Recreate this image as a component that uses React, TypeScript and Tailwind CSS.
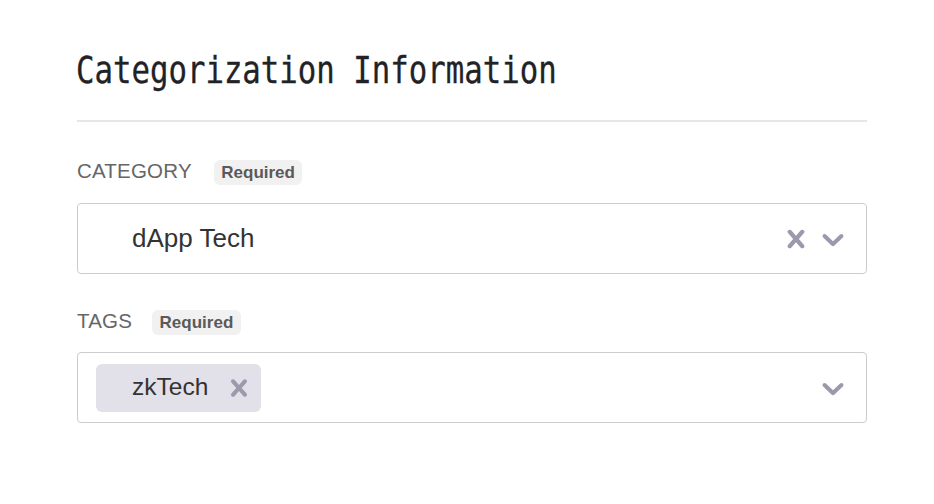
import React from "react";

const CrossIcon = ({ size }: { size: number }) => (
  <svg width={size} height={size} viewBox="0 0 20 20" fill="#9d99ad" aria-hidden="true">
    <path d="M14.348 14.849c-0.469 0.469-1.229 0.469-1.697 0l-2.651-3.030-2.651 3.029c-0.469 0.469-1.229 0.469-1.697 0-0.469-0.469-0.469-1.229 0-1.697l2.758-3.15-2.759-3.152c-0.469-0.469-0.469-1.228 0-1.697s1.228-0.469 1.697 0l2.652 3.031 2.651-3.031c0.469-0.469 1.228-0.469 1.697 0s0.469 1.229 0 1.697l-2.758 3.152 2.758 3.15c0.469 0.469 0.469 1.229 0 1.698z" />
  </svg>
);

const ChevronIcon = ({ size }: { size: number }) => (
  <svg width={size} height={size} viewBox="0 0 20 20" fill="#9d99ad" aria-hidden="true">
    <path d="M4.516 7.548c0.436-0.446 1.043-0.481 1.576 0l3.908 3.747 3.908-3.747c0.533-0.481 1.141-0.446 1.574 0 0.436 0.445 0.408 1.197 0 1.615-0.406 0.418-4.695 4.502-4.695 4.502-0.217 0.223-0.502 0.335-0.787 0.335s-0.57-0.112-0.789-0.335c0 0-4.287-4.084-4.695-4.502s-0.436-1.17 0-1.615z" />
  </svg>
);

const Label = ({ text, gap }: { text: string; gap: string }) => (
  <div className={`flex items-start h-[25px] ${gap}`}>
    <span className="text-[20.5px] leading-[22px] text-[#666666] tracking-[0.2px]">{text}</span>
    <span className="h-[25px] leading-[25px] px-[7.5px] rounded-[6px] bg-[#f1f1f1] text-[17px] font-bold text-[#5a5a5a]">
      Required
    </span>
  </div>
);

export default function App() {
  return (
    <div
      className="w-[934px] h-[504px] bg-white pl-[77px] pt-[47px]"
      style={{ fontFamily: '"Liberation Sans", Arial, sans-serif' }}
    >
      <div className="w-[790px] flex flex-col">
        <h2
          className="h-[46px] leading-[46px] text-[38px] text-[#1f2226] whitespace-nowrap origin-left scale-x-[0.808] -ml-[1px] [-webkit-text-stroke:0.35px_#1f2226]"
          style={{ fontFamily: '"DejaVu Sans Mono", monospace' }}
        >
          Categorization Information
        </h2>
        <div className="mt-[27px] h-[2px] bg-[#e6e6e6]" />

        <div className="mt-[38px]">
          <Label text="CATEGORY" gap="gap-[22px]" />
        </div>
        <div className="mt-[18px] h-[71px] border border-[#cccccc] rounded-[4px] flex items-center justify-between">
          <span className="pl-[54px] text-[26px] text-[#333333]">dApp Tech</span>
          <div className="flex items-center pr-[15px] gap-[1px]">
            <CrossIcon size={36} />
            <ChevronIcon size={36} />
          </div>
        </div>

        <div className="mt-[36px]">
          <Label text="TAGS" gap="gap-[20px]" />
        </div>
        <div className="mt-[17px] h-[71px] border border-[#cccccc] rounded-[4px] flex items-center justify-between">
          <div className="pl-[18px]">
            <div className="h-[48px] rounded-[6px] bg-[#e2e0e8] flex items-center pl-[36px] pr-[5px]">
              <span className="text-[24.5px] text-[#333333]">zkTech</span>
              <span className="ml-[14px] flex">
                <CrossIcon size={34} />
              </span>
            </div>
          </div>
          <div className="flex items-center pr-[15px]">
            <ChevronIcon size={36} />
          </div>
        </div>
      </div>
    </div>
  );
}
